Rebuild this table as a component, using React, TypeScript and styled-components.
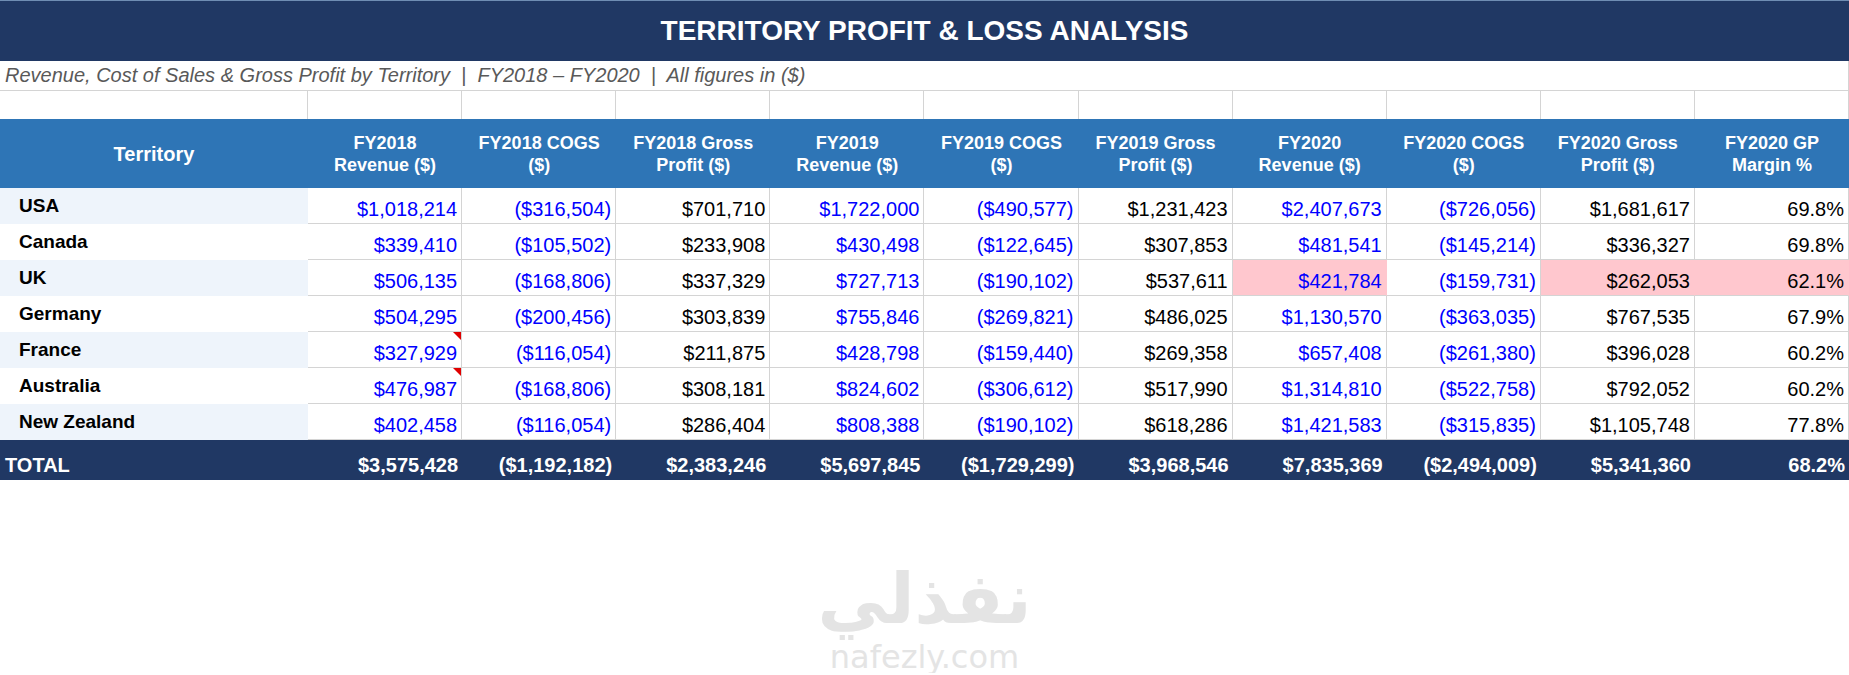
import React from 'react';
import styled, { createGlobalStyle, css } from 'styled-components';

const NAVY = '#203864';
const HEADER_BLUE = '#2e75b6';
const GRID_LINE = '#d4d4d4';
const BAND = '#eef4fb';
const PINK = '#ffc7ce';

const GlobalStyle = createGlobalStyle`
    * { box-sizing: border-box; }
    body {
        margin: 0;
        background: #fff;
        font-family: "Liberation Sans", Arial, sans-serif;
    }
`;

const Sheet = styled.div`
    width: 1849px;
    display: flex;
    flex-direction: column;
`;

const TitleBar = styled.div`
    height: 61px;
    background: ${NAVY};
    border-top: 1px solid #6f8db3;
    color: #fff;
    font-weight: 700;
    font-size: 28px;
    display: flex;
    align-items: center;
    justify-content: center;
`;

const SubtitleRow = styled.div`
    height: 30px;
    border-bottom: 1px solid ${GRID_LINE};
    border-right: 1px solid ${GRID_LINE};
    display: flex;
    align-items: flex-end;
    padding: 0 0 3px 5px;
    font-style: italic;
    font-size: 20px;
    color: #595959;
    white-space: pre;
`;

const Row = styled.div<{ height: number; bg?: string }>`
    display: grid;
    grid-template-columns: 308px repeat(10, 1fr);
    height: ${p => p.height}px;
    background: ${p => p.bg || 'transparent'};
`;

const SpacerCell = styled.div`
    border-right: 1px solid ${GRID_LINE};
`;

const HeadCell = styled.div<{ large?: boolean }>`
    display: flex;
    align-items: center;
    justify-content: center;
    text-align: center;
    padding: 0 8px;
    color: #fff;
    font-weight: 700;
    font-size: ${p => (p.large ? 20 : 18)}px;
    line-height: 22px;
`;

const NameCell = styled.div<{ banded: boolean }>`
    background: ${p => (p.banded ? BAND : '#fff')};
    display: flex;
    align-items: center;
    padding-left: 19px;
    font-weight: 700;
    font-size: 19px;
    color: #000;
`;

const ValueCell = styled.div<{ tone: 'blue' | 'black'; flagged?: boolean }>`
    position: relative;
    display: flex;
    align-items: flex-end;
    justify-content: flex-end;
    padding: 0 4px 2px 0;
    font-size: 20px;
    color: ${p => (p.tone === 'blue' ? '#0000ff' : '#000')};
    border-right: 1px solid ${GRID_LINE};
    border-bottom: 1px solid ${GRID_LINE};
    ${p =>
        p.flagged &&
        css`
            background: ${PINK};
            border-right-color: ${PINK};
        `}
`;

// little red corner = cell comment indicator
const CommentMark = styled.span`
    position: absolute;
    top: 0;
    right: 0;
    width: 0;
    height: 0;
    border-top: 8px solid #e00000;
    border-left: 8px solid transparent;
`;

const TotalCell = styled.div<{ first?: boolean }>`
    display: flex;
    align-items: flex-end;
    justify-content: ${p => (p.first ? 'flex-start' : 'flex-end')};
    padding: ${p => (p.first ? '0 0 3px 5px' : '0 4px 3px 0')};
    color: #fff;
    font-weight: 700;
    font-size: 20px;
`;

const Watermark = styled.div`
    display: flex;
    flex-direction: column;
    align-items: center;
    padding-top: 77px;
    color: #e4e4e4;
    font-family: "DejaVu Sans", sans-serif;
`;

const WatermarkArabic = styled.div`
    font-size: 70px;
    font-weight: 700;
    line-height: 84px;
    direction: rtl;
`;

const WatermarkLatin = styled.div`
    font-size: 32px;
    line-height: 32px;
`;

const headers = [
    'FY2018 Revenue ($)',
    'FY2018 COGS ($)',
    'FY2018 Gross Profit ($)',
    'FY2019 Revenue ($)',
    'FY2019 COGS ($)',
    'FY2019 Gross Profit ($)',
    'FY2020 Revenue ($)',
    'FY2020 COGS ($)',
    'FY2020 Gross Profit ($)',
    'FY2020 GP Margin %',
];

const tones: ('blue' | 'black')[] = ['blue', 'blue', 'black', 'blue', 'blue', 'black', 'blue', 'blue', 'black', 'black'];

interface Territory {
    name: string;
    values: string[];
    flagged?: number[];
    comments?: number[];
}

const territories: Territory[] = [
    { name: 'USA', values: ['$1,018,214', '($316,504)', '$701,710', '$1,722,000', '($490,577)', '$1,231,423', '$2,407,673', '($726,056)', '$1,681,617', '69.8%'] },
    { name: 'Canada', values: ['$339,410', '($105,502)', '$233,908', '$430,498', '($122,645)', '$307,853', '$481,541', '($145,214)', '$336,327', '69.8%'] },
    { name: 'UK', values: ['$506,135', '($168,806)', '$337,329', '$727,713', '($190,102)', '$537,611', '$421,784', '($159,731)', '$262,053', '62.1%'], flagged: [6, 8, 9] },
    { name: 'Germany', values: ['$504,295', '($200,456)', '$303,839', '$755,846', '($269,821)', '$486,025', '$1,130,570', '($363,035)', '$767,535', '67.9%'] },
    { name: 'France', values: ['$327,929', '($116,054)', '$211,875', '$428,798', '($159,440)', '$269,358', '$657,408', '($261,380)', '$396,028', '60.2%'], comments: [0] },
    { name: 'Australia', values: ['$476,987', '($168,806)', '$308,181', '$824,602', '($306,612)', '$517,990', '$1,314,810', '($522,758)', '$792,052', '60.2%'], comments: [0] },
    { name: 'New Zealand', values: ['$402,458', '($116,054)', '$286,404', '$808,388', '($190,102)', '$618,286', '$1,421,583', '($315,835)', '$1,105,748', '77.8%'] },
];

const totals = ['$3,575,428', '($1,192,182)', '$2,383,246', '$5,697,845', '($1,729,299)', '$3,968,546', '$7,835,369', '($2,494,009)', '$5,341,360', '68.2%'];

const App: React.FC = () => {
    return (
        <React.Fragment>
            <GlobalStyle />
            <Sheet>
                <TitleBar>TERRITORY PROFIT &amp; LOSS ANALYSIS</TitleBar>
                <SubtitleRow>
                    {'Revenue, Cost of Sales & Gross Profit by Territory  |  FY2018 – FY2020  |  All figures in ($)'}
                </SubtitleRow>
                <Row height={28}>
                    {Array.from({ length: 11 }).map((_, i) => (
                        <SpacerCell key={i} />
                    ))}
                </Row>
                <Row height={69} bg={HEADER_BLUE}>
                    <HeadCell large>Territory</HeadCell>
                    {headers.map(h => (
                        <HeadCell key={h}>{h}</HeadCell>
                    ))}
                </Row>
                {territories.map((t, r) => (
                    <Row height={36} key={t.name}>
                        <NameCell banded={r % 2 === 0}>{t.name}</NameCell>
                        {t.values.map((v, c) => (
                            <ValueCell key={c} tone={tones[c]} flagged={t.flagged?.includes(c)}>
                                {t.comments?.includes(c) && <CommentMark />}
                                {v}
                            </ValueCell>
                        ))}
                    </Row>
                ))}
                <Row height={40} bg={NAVY}>
                    <TotalCell first>TOTAL</TotalCell>
                    {totals.map((v, c) => (
                        <TotalCell key={c}>{v}</TotalCell>
                    ))}
                </Row>
                <Watermark>
                    <WatermarkArabic>نفذلي</WatermarkArabic>
                    <WatermarkLatin>nafezly.com</WatermarkLatin>
                </Watermark>
            </Sheet>
        </React.Fragment>
    );
};

export default App;
